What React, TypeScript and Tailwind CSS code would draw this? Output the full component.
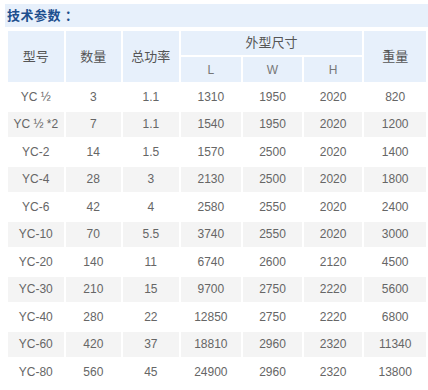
const rows: string[][] = [
  ['YC ½', '3', '1.1', '1310', '1950', '2020', '820'],
  ['YC ½ *2', '7', '1.1', '1540', '1950', '2020', '1200'],
  ['YC-2', '14', '1.5', '1570', '2500', '2020', '1400'],
  ['YC-4', '28', '3', '2130', '2500', '2020', '1800'],
  ['YC-6', '42', '4', '2580', '2550', '2020', '2400'],
  ['YC-10', '70', '5.5', '3740', '2550', '2020', '3000'],
  ['YC-20', '140', '11', '6740', '2600', '2120', '4500'],
  ['YC-30', '210', '15', '9700', '2750', '2220', '5600'],
  ['YC-40', '280', '22', '12850', '2750', '2220', '6800'],
  ['YC-60', '420', '37', '18810', '2960', '2320', '11340'],
  ['YC-80', '560', '45', '24900', '2960', '2320', '13800'],
];

const widths = ['w-[56px]', 'w-[56px]', 'w-[56px]', 'w-[61px]', 'w-[59px]', 'w-[59px]', 'w-[62px]'];

export default function App() {
  return (
    <div
      className="w-[428px] h-[390px] overflow-hidden bg-white pl-[5px] pt-[4px]"
      style={{ fontFamily: '"Liberation Sans", Arial, "Noto Sans CJK SC", sans-serif' }}
    >
      {/* Title bar */}
      <div className="h-[23px] w-[440px] bg-[#e7f0fb] flex items-center pl-[2px]">
        <span className="text-[13px] font-bold text-[#1d4f8e] tracking-[0.5px]">技术参数 ：</span>
      </div>

      <table className="border-separate border-spacing-[2px] mt-[2px] ml-px text-[12px] text-[#666] table-fixed">
        <colgroup>
          {widths.map((w, i) => (
            <col key={i} className={w} />
          ))}
        </colgroup>
        <thead className="text-[13px] text-[#555] font-normal">
          <tr>
            <th rowSpan={2} className="bg-[#e7f0fb] font-normal">型号</th>
            <th rowSpan={2} className="bg-[#e7f0fb] font-normal">数量</th>
            <th rowSpan={2} className="bg-[#e7f0fb] font-normal">总功率</th>
            <th colSpan={3} className="bg-[#e7f0fb] font-normal h-[24px]">外型尺寸</th>
            <th rowSpan={2} className="bg-[#e7f0fb] font-normal">重量</th>
          </tr>
          <tr>
            <th className="bg-[#e7f0fb] font-normal h-[25px] text-[12px] text-[#777]">L</th>
            <th className="bg-[#e7f0fb] font-normal h-[25px] text-[12px] text-[#777]">W</th>
            <th className="bg-[#e7f0fb] font-normal h-[25px] text-[12px] text-[#777]">H</th>
          </tr>
        </thead>
        <tbody>
          {rows.map((r, i) => (
            <tr key={i} className="h-[25.5px]">
              {r.map((c, j) => (
                <td key={j} className={`text-center p-0 ${i % 2 === 1 ? 'bg-[#f4f4f4]' : ''}`}>
                  {c}
                </td>
              ))}
            </tr>
          ))}
        </tbody>
      </table>
    </div>
  );
}
